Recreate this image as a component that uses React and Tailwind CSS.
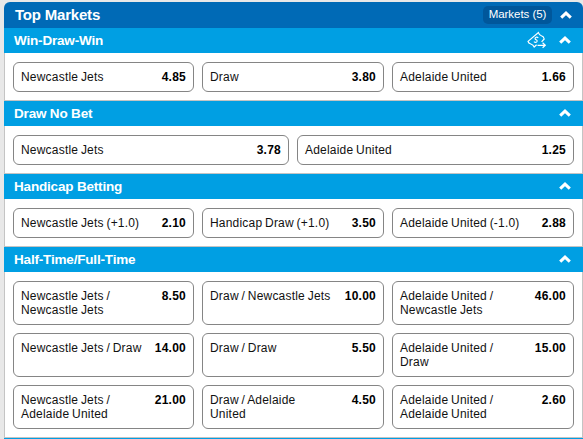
import React, { useState } from "react";
import clsx from "clsx";

const markets = [
  {
    name: "Win-Draw-Win",
    cashOut: true,
    columns: 3,
    selections: [
      { name: "Newcastle Jets", price: "4.85" },
      { name: "Draw", price: "3.80" },
      { name: "Adelaide United", price: "1.66" },
    ],
  },
  {
    name: "Draw No Bet",
    columns: 2,
    selections: [
      { name: "Newcastle Jets", price: "3.78" },
      { name: "Adelaide United", price: "1.25" },
    ],
  },
  {
    name: "Handicap Betting",
    columns: 3,
    selections: [
      { name: "Newcastle Jets (+1.0)", price: "2.10" },
      { name: "Handicap Draw (+1.0)", price: "3.50" },
      { name: "Adelaide United (-1.0)", price: "2.88" },
    ],
  },
  {
    name: "Half-Time/Full-Time",
    columns: 3,
    tall: true,
    selections: [
      { name: "Newcastle Jets / Newcastle Jets", price: "8.50" },
      { name: "Draw / Newcastle Jets", price: "10.00" },
      { name: "Adelaide United / Newcastle Jets", price: "46.00" },
      { name: "Newcastle Jets / Draw", price: "14.00" },
      { name: "Draw / Draw", price: "5.50" },
      { name: "Adelaide United / Draw", price: "15.00" },
      { name: "Newcastle Jets / Adelaide United", price: "21.00" },
      { name: "Draw / Adelaide United", price: "4.50" },
      { name: "Adelaide United / Adelaide United", price: "2.60" },
    ],
  },
];

function Chevron({ open = true }) {
  return (
    <svg
      viewBox="0 0 12 8"
      className={clsx("h-2 w-3 shrink-0", !open && "rotate-180")}
      fill="none"
      stroke="white"
      strokeWidth="3"
    >
      <path d="M1.2 6.7 L6 2.1 L10.8 6.7" />
    </svg>
  );
}

function CashOutIcon() {
  return (
    <svg
      viewBox="0 0 20 18"
      className="h-[18px] w-5 shrink-0"
      fill="none"
      stroke="white"
      strokeWidth="1.2"
    >
      <path d="M14.6 10.8 L17.2 8 Q16.8 5.6 14.4 4.8 Q12.2 4 11.4 1.6 L1 10.4 Q1.4 12.4 3.8 13 Q6.2 13.8 7.2 16 L9.6 13.8" />
      <path
        d="M11.3 6.9 Q9.9 5.5 8.5 6.6 Q7.4 7.8 9.1 8.7 Q10.8 9.6 9.8 10.9 Q8.4 12 6.9 10.6"
        strokeWidth="1.1"
      />
      <path d="M10.5 14.3 H18.2 M15.6 11.8 L18.3 14.3 L15.6 16.8" />
    </svg>
  );
}

function Selection({ name, price, tall }) {
  return (
    <button
      type="button"
      className={clsx(
        "flex items-start justify-between rounded-[6px] border border-[#858585] bg-white px-[7px] pt-[7px] text-left text-[12px] leading-[14px] text-[#111]",
        tall ? "h-11" : "h-[30px]"
      )}
    >
      <span
        className={clsx(
          "tracking-[0.2px] [word-spacing:-0.8px]",
          tall && "max-w-[122px]"
        )}
      >
        {name}
      </span>
      <span className="font-bold tracking-[0.25px] text-black">{price}</span>
    </button>
  );
}

function Market({ market }) {
  const [open, setOpen] = useState(true);

  return (
    <section>
      <div
        className="flex h-[25px] cursor-pointer items-center justify-between bg-[#009fe3] pr-3 pl-[10px]"
        onClick={() => setOpen(!open)}
      >
        <h3 className="text-[13.5px] leading-[21px] font-bold tracking-[-0.18px] text-white">
          {market.name}
        </h3>
        <div className="flex items-center gap-3 pb-px">
          {market.cashOut && <CashOutIcon />}
          <Chevron open={open} />
        </div>
      </div>
      {open && (
        <div
          className={clsx(
            "grid gap-2 border-x border-b border-[#c4c4c4] bg-white px-2 pt-[9px] pb-2",
            market.columns === 2
              ? "grid-cols-[276fr_277fr]"
              : "grid-cols-[181fr_182fr_182fr]"
          )}
        >
          {market.selections.map((selection) => (
            <Selection
              key={selection.name}
              name={selection.name}
              price={selection.price}
              tall={market.tall}
            />
          ))}
        </div>
      )}
    </section>
  );
}

function App() {
  return (
    <div className="h-[439px] w-[583px] overflow-hidden bg-[#e8e8e8] pt-[2px] pl-1 font-['Liberation_Sans',Arial,sans-serif]">
      <header className="flex h-[26px] items-center justify-between rounded-t-[6px] bg-[#006ab6] pr-[11px] pl-[11px]">
        <h2 className="text-[15px] font-bold tracking-[-0.2px] text-white">
          Top Markets
        </h2>
        <div className="flex items-center gap-2 pb-px">
          <span className="flex h-[18px] w-[69px] items-center justify-center rounded-[5px] bg-[#00579b] text-[11.5px] tracking-[-0.05px] text-white">
            Markets (5)
          </span>
          <Chevron />
        </div>
      </header>
      {markets.map((market) => (
        <Market key={market.name} market={market} />
      ))}
      <div className="h-[25px] bg-[#009fe3]" />
    </div>
  );
}

export default App;
